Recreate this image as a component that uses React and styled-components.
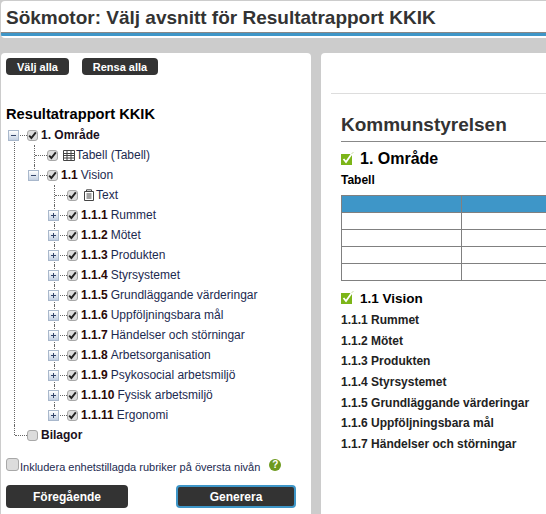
import React from 'react';
import styled, { createGlobalStyle } from 'styled-components';

const GlobalStyle = createGlobalStyle`
  html, body {
    margin: 0;
    height: 100%;
    overflow: hidden;
    background: #ccc;
    font-family: 'Liberation Sans', Arial, sans-serif;
  }
`;

const Page = styled.div`
  width: 546px;
  height: 514px;
  overflow: hidden;
  padding: 1px 0 0 1px;
  box-sizing: border-box;
`;

const Header = styled.header`
  width: 700px;
  height: 37px;
  box-sizing: border-box;
  background: #fff;
  border-radius: 4px 0 0 4px;
  overflow: hidden;
`;

const Title = styled.h1`
  margin: 0;
  height: 35px;
  box-sizing: border-box;
  padding: 4px 0 0 5px;
  font-size: 19px;
  line-height: 26px;
  font-weight: bold;
  color: #333;
  border-bottom: 3px solid #3e96c8;
  box-shadow: inset 0 -1px 0 #888;
`;

const Columns = styled.div`
  display: flex;
  gap: 10px;
  margin-top: 15px;
`;

const LeftPanel = styled.section`
  width: 310px;
  height: 461px;
  flex: none;
  box-sizing: border-box;
  padding: 5px 0 0 5px;
  background: #fff;
  border-radius: 4px 4px 0 0;
`;

const TopButtons = styled.div`
  display: flex;
  gap: 13px;
`;

const SmallButton = styled.button`
  width: ${p => p.$width}px;
  height: 17px;
  padding: 0;
  border: 0;
  border-radius: 4px;
  background: #333;
  color: #fff;
  font: bold 11px 'Liberation Sans', Arial, sans-serif;
`;

const TreeTitle = styled.h2`
  margin: 27px 0 0;
  height: 22px;
  font-size: 14.67px;
  line-height: 24px;
  font-weight: bold;
  color: #000;
`;

const TreeRoot = styled.ul`
  list-style: none;
  margin: 1px 0 0 2px;
  padding: 0;
`;

const Branch = styled.ul`
  list-style: none;
  margin: 0;
  padding: 0 0 0 20px;
`;

const Node = styled.li`
  position: relative;

  &::before {
    content: '';
    position: absolute;
    left: 6px;
    top: ${p => (p.$first ? 10 : 0)}px;
    bottom: ${p => (p.$last ? 'auto' : 0)};
    height: ${p => (p.$last ? `${p.$first ? 0 : 10}px` : 'auto')};
    border-left: 1px dotted #666;
  }
`;

const Row = styled.div`
  position: relative;
  display: flex;
  align-items: center;
  height: 20px;
  padding-left: ${p => (p.$leaf ? 19 : 0)}px;
  font-size: 12px;
  color: #1c2a50;
  white-space: nowrap;

  &::before {
    content: '';
    position: absolute;
    left: 7px;
    top: 10px;
    width: 12px;
    border-top: 1px dotted #666;
  }
`;

const Expander = styled.span`
  position: relative;
  flex: none;
  width: 11px;
  height: 11px;
  margin-right: 8px;
  box-sizing: border-box;
  border: 1px solid #a9b8cc;
  background: linear-gradient(#fff, #c3d0e2);

  &::before {
    content: '';
    position: absolute;
    left: 2px;
    top: 4px;
    width: 5px;
    height: 1px;
    background: #34456a;
  }

  &::after {
    content: '';
    display: ${p => (p.$open ? 'none' : 'block')};
    position: absolute;
    left: 4px;
    top: 2px;
    width: 1px;
    height: 5px;
    background: #34456a;
  }
`;

const CheckBox = styled.span`
  position: relative;
  flex: none;
  display: flex;
  align-items: center;
  justify-content: center;
  width: ${p => p.$size || 11}px;
  height: ${p => p.$size || 11}px;
  box-sizing: border-box;
  border: 1px solid #a8a8a8;
  border-radius: 3px;
  background: #dcdcdc;
`;

const Label = styled.span`
  margin-left: 3px;
`;

const Number = styled.b`
  color: #2a0808;
  margin-right: 3px;
`;

const RootLabel = styled.b`
  margin-left: 3px;
  color: #1a1020;
`;

const NodeIcon = styled.svg`
  flex: none;
  margin-left: 5px;
  margin-right: -2px;
`;

const OptionRow = styled.div`
  display: flex;
  align-items: flex-start;
  margin-top: 13px;
  height: 22px;
`;

const OptionText = styled.span`
  margin-top: 2px;
  margin-left: 1px;
  font-size: 11px;
  line-height: 14px;
  color: #1c2a50;
  white-space: nowrap;
`;

const HelpIcon = styled.span`
  flex: none;
  width: 12px;
  height: 12px;
  margin: 1px 0 0 9px;
  border-radius: 50%;
  background: #6d9a1e;
  color: #fff;
  font-size: 10px;
  font-weight: bold;
  line-height: 12px;
  text-align: center;
`;

const BottomButtons = styled.div`
  display: flex;
  gap: 48px;
  margin-top: 5px;
`;

const BigButton = styled.button`
  width: ${p => p.$width}px;
  height: 23px;
  padding: 0;
  box-sizing: border-box;
  border: ${p => (p.$active ? '2px solid #3e96c8' : '0')};
  border-radius: 4px;
  background: #333;
  color: #fff;
  font: bold 12px 'Liberation Sans', Arial, sans-serif;
`;

const RightPanel = styled.section`
  width: 400px;
  height: 461px;
  flex: none;
  box-sizing: border-box;
  padding: 40px 0 0 10px;
  background: #fff;
  border-radius: 4px 0 0 0;
`;

const PanelRule = styled.div`
  border-top: 1px solid #ddd;
`;

const Content = styled.div`
  padding: 17px 0 0 10px;
`;

const OrgHeading = styled.h2`
  margin: 0;
  height: 30px;
  font-size: 19px;
  line-height: 28px;
  font-weight: bold;
  color: #333;
  border-bottom: 1px solid #888;
`;

const SectionHeading = styled.h3`
  display: flex;
  align-items: center;
  gap: 6px;
  margin: 0;
  height: ${p => (p.$small ? 20 : 22)}px;
  margin-top: ${p => (p.$small ? 7 : 6)}px;
  font-size: ${p => (p.$small ? 13.5 : 16)}px;
  font-weight: bold;
  color: #000;
`;

const TableCaption = styled.div`
  margin-top: 3px;
  height: 15px;
  font-size: 12px;
  line-height: 15px;
  font-weight: bold;
  color: #000;
`;

const ResultTable = styled.div`
  display: grid;
  grid-template-columns: 120px 200px;
  grid-auto-rows: 17px;
  margin-top: 7px;
  border: 1px solid #808080;
  border-width: 1px 0 0 1px;
`;

const Cell = styled.div`
  box-sizing: border-box;
  border: 1px solid #808080;
  border-width: 0 1px 1px 0;
  background: ${p => (p.$head ? '#3e96c8' : '#fff')};
`;

const SubList = styled.div`
  margin-top: 2px;
`;

const SubItem = styled.div`
  height: 20.67px;
  font-size: 12px;
  line-height: 20.67px;
  font-weight: bold;
  color: #222;
`;

const Check = () => (
  <svg width="9" height="9" viewBox="0 0 9 9">
    <path d="M1.2 4.6 L3.4 7 L7.8 1.4" fill="none" stroke="#222" strokeWidth="1.9" />
  </svg>
);

const GreenCheck = () => (
  <svg width="13" height="14" viewBox="0 0 13 14">
    <rect x="0" y="2" width="11" height="11" fill="#7cb518" />
    <path d="M2.5 7 L5 10 L11 1.5" fill="none" stroke="#fff" strokeWidth="1.8" />
    <path d="M10.5 2 L12.5 0" fill="none" stroke="#c9dca0" strokeWidth="1" />
  </svg>
);

const TableIcon = () => (
  <NodeIcon width="12" height="11" viewBox="0 0 12 11">
    <path d="M.5.5h11v10H.5zM.5 3.5h11M.5 5.5h11M.5 8h11M4 .5v10M8 .5v10" fill="none" stroke="#444" />
  </NodeIcon>
);

const TextIcon = () => (
  <NodeIcon width="12" height="12" viewBox="0 0 12 12">
    <path d="M1.5 2.5h9v9h-9zM3.5 2.5V.8h5v1.7M3.5 5h5M3.5 7h5M3.5 9h5" fill="none" stroke="#444" />
  </NodeIcon>
);

const subSections = [
  ['1.1.1', 'Rummet'],
  ['1.1.2', 'Mötet'],
  ['1.1.3', 'Produkten'],
  ['1.1.4', 'Styrsystemet'],
  ['1.1.5', 'Grundläggande värderingar'],
  ['1.1.6', 'Uppföljningsbara mål'],
  ['1.1.7', 'Händelser och störningar'],
  ['1.1.8', 'Arbetsorganisation'],
  ['1.1.9', 'Psykosocial arbetsmiljö'],
  ['1.1.10', 'Fysisk arbetsmiljö'],
  ['1.1.11', 'Ergonomi'],
];

const App = () => (
  <Page>
    <GlobalStyle />
    <Header>
      <Title>Sökmotor: Välj avsnitt för Resultatrapport KKIK</Title>
    </Header>
    <Columns>
      <LeftPanel>
        <TopButtons>
          <SmallButton $width={63}>Välj alla</SmallButton>
          <SmallButton $width={76}>Rensa alla</SmallButton>
        </TopButtons>
        <TreeTitle>Resultatrapport KKIK</TreeTitle>
        <TreeRoot>
          <Node $first>
            <Row>
              <Expander $open />
              <CheckBox><Check /></CheckBox>
              <RootLabel>1. Område</RootLabel>
            </Row>
            <Branch>
              <Node>
                <Row $leaf>
                  <CheckBox><Check /></CheckBox>
                  <TableIcon />
                  <Label>Tabell (Tabell)</Label>
                </Row>
              </Node>
              <Node $last>
                <Row>
                  <Expander $open />
                  <CheckBox><Check /></CheckBox>
                  <Label><Number>1.1</Number>Vision</Label>
                </Row>
                <Branch>
                  <Node>
                    <Row $leaf>
                      <CheckBox><Check /></CheckBox>
                      <TextIcon />
                      <Label>Text</Label>
                    </Row>
                  </Node>
                  {subSections.map(([num, name], i) => (
                    <Node key={num} $last={i === subSections.length - 1}>
                      <Row>
                        <Expander />
                        <CheckBox><Check /></CheckBox>
                        <Label><Number>{num}</Number>{name}</Label>
                      </Row>
                    </Node>
                  ))}
                </Branch>
              </Node>
            </Branch>
          </Node>
          <Node $last>
            <Row $leaf>
              <CheckBox />
              <RootLabel>Bilagor</RootLabel>
            </Row>
          </Node>
        </TreeRoot>
        <OptionRow>
          <CheckBox $size={13} />
          <OptionText>Inkludera enhetstillagda rubriker på översta nivån</OptionText>
          <HelpIcon>?</HelpIcon>
        </OptionRow>
        <BottomButtons>
          <BigButton $width={122}>Föregående</BigButton>
          <BigButton $width={120} $active>Generera</BigButton>
        </BottomButtons>
      </LeftPanel>
      <RightPanel>
        <PanelRule />
        <Content>
          <OrgHeading>Kommunstyrelsen</OrgHeading>
          <SectionHeading><GreenCheck />1. Område</SectionHeading>
          <TableCaption>Tabell</TableCaption>
          <ResultTable>
            <Cell $head /><Cell $head />
            <Cell /><Cell />
            <Cell /><Cell />
            <Cell /><Cell />
            <Cell /><Cell />
          </ResultTable>
          <SectionHeading $small><GreenCheck />1.1 Vision</SectionHeading>
          <SubList>
            {subSections.slice(0, 7).map(([num, name]) => (
              <SubItem key={num}>{num} {name}</SubItem>
            ))}
          </SubList>
        </Content>
      </RightPanel>
    </Columns>
  </Page>
);

export default App;
